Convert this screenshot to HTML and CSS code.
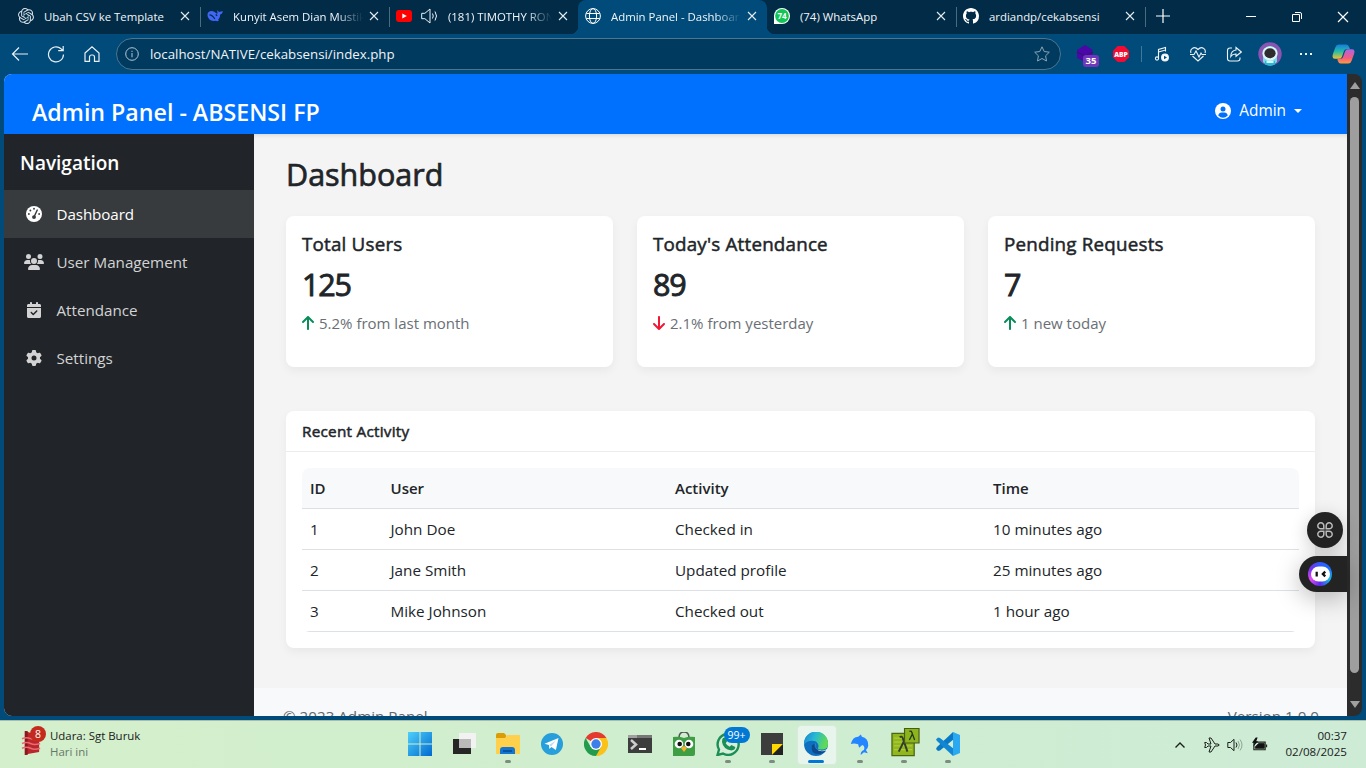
FILE: index.html
```html
<!DOCTYPE html>
<html lang="id">
<head>
<meta charset="utf-8">
<title>Admin Panel - Dashboard</title>
<link rel="stylesheet" href="styles.css">
</head>
<body>
<div class="desktop">
  <div class="tabstrip">
    <div class="tab">
      <svg class="fav" viewBox="0 0 24 24"><path fill="#d5dee5" d="M22.2819 9.8211a5.9847 5.9847 0 0 0-.5157-4.9108 6.0462 6.0462 0 0 0-6.5098-2.9A6.0651 6.0651 0 0 0 4.9807 4.1818a5.9847 5.9847 0 0 0-3.9977 2.9 6.0462 6.0462 0 0 0 .7427 7.0966 5.98 5.98 0 0 0 .511 4.9107 6.051 6.051 0 0 0 6.5146 2.9001A5.9847 5.9847 0 0 0 13.2599 24a6.0557 6.0557 0 0 0 5.7718-4.2058 5.9894 5.9894 0 0 0 3.9977-2.9001 6.0557 6.0557 0 0 0-.7475-7.0729zm-9.022 12.6081a4.4755 4.4755 0 0 1-2.8764-1.0408l.1419-.0804 4.7783-2.7582a.7948.7948 0 0 0 .3927-.6813v-6.7369l2.02 1.1686a.071.071 0 0 1 .038.052v5.5826a4.504 4.504 0 0 1-4.4945 4.4944zm-9.6607-4.1254a4.4708 4.4708 0 0 1-.5346-3.0137l.142.0852 4.783 2.7582a.7712.7712 0 0 0 .7806 0l5.8428-3.3685v2.3324a.0804.0804 0 0 1-.0332.0615L9.74 19.9502a4.4992 4.4992 0 0 1-6.1408-1.6464zM2.3408 7.8956a4.485 4.485 0 0 1 2.3655-1.9728V11.6a.7664.7664 0 0 0 .3879.6765l5.8144 3.3543-2.0201 1.1685a.0757.0757 0 0 1-.071 0l-4.8303-2.7865A4.504 4.504 0 0 1 2.3408 7.872zm16.5963 3.8558L13.1038 8.364 15.1192 7.2a.0757.0757 0 0 1 .071 0l4.8303 2.7913a4.4944 4.4944 0 0 1-.6765 8.1042v-5.6772a.79.79 0 0 0-.407-.667zm2.0107-3.0231l-.142-.0852-4.7735-2.7818a.7759.7759 0 0 0-.7854 0L9.409 9.2297V6.8974a.0662.0662 0 0 1 .0284-.0615l4.8303-2.7866a4.4992 4.4992 0 0 1 6.6802 4.66zM8.3065 12.863l-2.02-1.1638a.0804.0804 0 0 1-.038-.0567V6.0742a4.4992 4.4992 0 0 1 7.3757-3.4537l-.142.0805L8.704 5.459a.7948.7948 0 0 0-.3927.6813zm1.0976-2.3654l2.602-1.4998 2.6069 1.4998v2.9994l-2.5974 1.4997-2.6067-1.4997Z"/></svg>
      <span class="tab-title">Ubah CSV ke Template</span>
      <svg class="x" viewBox="0 0 10 10"><path d="M1 1l8 8M9 1L1 9"/></svg>
    </div>
    <div class="tab">
      <svg class="fav" viewBox="0 0 16 16"><path fill="#4166f5" d="M.5 7C.4 4.300 2.300 2.800 5 2.900c1.300 0 2.300.8 3.300 1.700 1 1 2 1.500 2.200.5.100-1.200-.7-1.700 0-3.100.5 1.500 1.300 1.700 2.400 2 .8-.7 1.800-.4 2.800-.9-.1 2.200-1 3.100-2.500 3.300-.1 2.700-1 4.400-2.300 5.500l1.300.9c-2 .8-3 .3-4-.1C4.200 13.800.700 11 .5 7z"/><path d="M2.500 6.800c2 0 3.600 1.400 5.300 4M8.700 6.500l1.500 1.300" stroke="#012b47" stroke-width="1.200" fill="none"/></svg>
      <span class="tab-title fade">Kunyit Asem Dian Mustik</span>
      <svg class="x" viewBox="0 0 10 10"><path d="M1 1l8 8M9 1L1 9"/></svg>
    </div>
    <div class="tab nosep">
      <svg class="fav" viewBox="0 0 16 16"><rect y="2" width="16" height="12" rx="3" fill="#f00"/><path d="M6.300 5.500v5l4.500-2.500z" fill="#fff"/></svg>
      <svg class="speaker" viewBox="0 0 17 16" fill="none" stroke="#eef3f7"><path d="M.7 5.300h3.200L9 1v14l-5.100-4.300H.7zM11.500 5.500q1.500 2.500 0 5M14 3.500q3 4.500 0 9"/></svg>
      <span class="tab-title fade">(181) TIMOTHY RON</span>
      <svg class="x" viewBox="0 0 10 10"><path d="M1 1l8 8M9 1L1 9"/></svg>
    </div>
    <div class="tab active nosep">
      <svg class="fav" viewBox="0 0 16 16" fill="none" stroke="#fff"><circle cx="8" cy="8" r="7.400"/><ellipse cx="8" cy="8" rx="3.600" ry="7.400"/><path d="M1.300 5.500h13.400M1.300 10.500h13.400"/></svg>
      <span class="tab-title fade">Admin Panel - Dashboar</span>
      <svg class="x" viewBox="0 0 10 10"><path d="M1 1l8 8M9 1L1 9"/></svg>
    </div>
    <div class="tab">
      <svg class="fav" viewBox="0 0 16 16"><path d="M0 16V8a8 8 0 1 1 8 8z" fill="#fff"/><circle cx="8" cy="8" r="6.900" fill="#12c656"/><text class="fav-count" x="8" y="11" text-anchor="middle">74</text></svg>
      <span class="tab-title">(74) WhatsApp</span>
      <svg class="x" viewBox="0 0 10 10"><path d="M1 1l8 8M9 1L1 9"/></svg>
    </div>
    <div class="tab">
      <svg class="fav" viewBox="0 0 16 16"><path fill="#fff" d="M8 0C3.580 0 0 3.580 0 8c0 3.540 2.290 6.530 5.470 7.590.4.070.55-.17.55-.38 0-.19-.01-.82-.01-1.490-2.010.37-2.530-.49-2.690-.94-.09-.23-.48-.94-.82-1.130-.28-.15-.68-.52-.01-.53.63-.01 1.080.58 1.230.82.720 1.210 1.870.87 2.330.66.070-.52.28-.87.51-1.070-1.780-.2-3.640-.89-3.640-3.950 0-.87.31-1.590.82-2.150-.08-.2-.36-1.020.08-2.120 0 0 .67-.21 2.200.82.640-.18 1.320-.27 2-.27s1.360.09 2 .27c1.530-1.040 2.200-.82 2.200-.82.440 1.100.16 1.920.08 2.120.51.56.82 1.270.82 2.150 0 3.070-1.870 3.750-3.650 3.950.29.25.54.73.54 1.480 0 1.070-.01 1.930-.01 2.200 0 .21.15.46.55.38A8.010 8.010 0 0 0 16 8c0-4.420-3.580-8-8-8z"/></svg>
      <span class="tab-title">ardiandp/cekabsensi</span>
      <svg class="x" viewBox="0 0 10 10"><path d="M1 1l8 8M9 1L1 9"/></svg>
    </div>
    <svg class="newtab" viewBox="0 0 14 14"><path d="M7 0v14M0 7h14"/></svg>
    <div class="winctl">
      <svg viewBox="0 0 12 12"><path d="M1 5.500h10"/></svg>
      <svg viewBox="0 0 12 12"><path d="M1.500 3.500h7v7h-7zM4 1.500h5q1.500 0 1.500 1.500v5"/></svg>
      <svg viewBox="0 0 12 12"><path d="M1 1l10 10M11 1L1 11" stroke-width="1.200"/></svg>
    </div>
  </div>

  <div class="toolbar">
    <div class="navbtns">
      <svg viewBox="0 0 18 18"><path d="M17 9H1.500M8 2.500L1.500 9 8 15.500"/></svg>
      <svg viewBox="0 0 18 18"><path d="M16.500 9.500A7.500 7.500 0 1 1 14 3.800L16 5.500M16.200 1v4.700h-5"/></svg>
      <svg viewBox="0 0 18 18"><path d="M2 8l7-6.300L16 8v8.300h-4.500V12a2 2 0 0 0-2-2h-1a2 2 0 0 0-2 2v4.300H2z"/></svg>
    </div>
    <div class="address">
      <svg class="info" viewBox="0 0 14 14"><circle cx="7" cy="7" r="6.300"/><path d="M7 6v4.300M7 3.800v1.200"/></svg>
      <span class="url">localhost/NATIVE/cekabsensi/index.php</span>
      <svg class="star" viewBox="0 0 16 16"><path d="M8 .8l2.200 4.700 5.100.7-3.700 3.600.9 5.200L8 12.500 3.500 15l.9-5.200L.7 6.200l5.100-.7z"/></svg>
    </div>
    <div class="tools">
      <div class="ext"><svg viewBox="0 0 22 22"><path d="M1 5l8-5 8 5-1 1 1 7-8 4-8-4v-5z" fill="#4b07a7"/><path d="M1 7l8 4 8-4" fill="none" stroke="#2e1872"/></svg><span class="ext-badge">35</span></div>
      <div class="abp"><svg viewBox="0 0 16 16"><path d="M4.700 0h6.600L16 4.700v6.600L11.300 16H4.700L0 11.300V4.700z" fill="#f20b32"/><text class="abp-text" x="8" y="10.500" text-anchor="middle">ABP</text></svg></div>
      <span class="toolsep"></span>
      <div class="actions">
        <svg viewBox="0 0 16 16"><path d="M4.500 12V3.500l7-2v4M4.500 6l7-2"/><circle cx="3" cy="12.500" r="1.600"/><circle cx="11" cy="11.500" r="3.400" fill="#fff"/><path d="M10 9.700v3.600l3-1.800z" fill="#004b7a" stroke="none"/></svg>
        <svg viewBox="0 0 16 16"><path d="M1 7C-.5 2.500 4.500-.2 8 3.500 11.500-.2 16.500 2.500 15 7M2.500 10L8 15l5.500-5M0 8.500h4L6 5l3 6 2-4 1 1.500h4"/></svg>
        <svg viewBox="0 0 16 16"><path d="M6 2H4Q1.500 2 1.500 4.500v8Q1.500 15 4 15h7.500Q14 15 14 12.500V11.500M10 1.500L15.300 6 10 10.300V8Q6.500 7.800 4.800 10.500 5 4.600 10 4z"/></svg>
      </div>
      <svg class="avatar" viewBox="0 0 24 24"><circle cx="12" cy="12" r="11.700" fill="#8a55b0"/><path d="M5 20V8q7-8 14 0v12q-7 7-14 0z" fill="#75d9e6"/><ellipse cx="12" cy="11.500" rx="7.600" ry="7" fill="#d9f7fa"/><ellipse cx="12" cy="11.300" rx="5.600" ry="5" fill="#302b2e"/><path d="M7 19h10v3.500q-5 2-10 0z" fill="#20bdd2"/><path d="M8.500 18.500h7V21h-7z" fill="#d9f7fa"/></svg>
      <svg class="dots" viewBox="0 0 16 16"><path d="M2 8h2M7 8h2M12 8h2"/></svg>
      <svg class="copilot" viewBox="0 0 24 22"><defs><linearGradient id="cpA" x2="0" y2="1"><stop stop-color="#147ddd"/><stop offset=".5" stop-color="#27bda7"/><stop offset="1" stop-color="#f5c12a"/></linearGradient><linearGradient id="cpB" x2="0" y2="1"><stop stop-color="#ac65e5"/><stop offset=".6" stop-color="#f45b80"/><stop offset="1" stop-color="#ff9d3b"/></linearGradient></defs><path d="M7 1h8q2 0 3 3l.7 2H15q-2 0-2.700 2.500l-2 5.500Q9.500 16 7 16H3Q-.5 16 1 11l2.500-7Q4.500 1 7 1z" fill="url(#cpA)"/><path d="M17 21H9q-2 0-3-3l-.5-2H9q2 0 2.700-2.500l2-5.500q.8-2 3.300-2h4q3.500 0 2 5l-2.500 7q-1 3-3.500 3z" fill="url(#cpB)"/></svg>
    </div>
  </div>

  <div class="viewport">
    <div class="page">
      <header class="topbar">
        <h1 class="brand">Admin Panel - ABSENSI FP</h1>
        <div class="user"><svg viewBox="0 0 16 16"><circle cx="8" cy="8" r="8" fill="#fff"/><circle cx="8" cy="6" r="2.500" fill="#0070ff"/><path d="M3.200 12.500Q4 9.500 6.500 9.500h3q2.500 0 3.300 3Q8 17 3.200 12.500z" fill="#0070ff"/></svg><span>Admin</span><i class="caret"></i></div>
      </header>
      <div class="body">
        <nav class="sidebar">
          <h2 class="nav-head">Navigation</h2>
          <a class="nav-item current"><svg viewBox="0 0 512 512"><circle cx="256" cy="256" r="256"/><g fill="#373b3e"><circle cx="256" cy="88" r="30"/><circle cx="140" cy="142" r="30"/><circle cx="92" cy="256" r="30"/><circle cx="420" cy="256" r="30"/><circle cx="256" cy="354" r="62"/></g><path d="M256 354L360 130" stroke="#373b3e" stroke-width="46" stroke-linecap="round"/></svg><span>Dashboard</span></a>
          <a class="nav-item"><svg viewBox="0 0 640 512"><path d="M144 0a80 80 0 1 1 0 160A80 80 0 1 1 144 0zM512 0a80 80 0 1 1 0 160A80 80 0 1 1 512 0zM0 298.700C0 239.800 47.800 192 106.700 192h42.700c15.900 0 31 3.500 44.600 9.700c-1.300 7.200-1.900 14.700-1.900 22.300c0 38.200 16.800 72.500 43.300 96H21.300C9.600 320 0 310.400 0 298.700zM404.600 320c26.600-23.500 43.300-57.800 43.300-96c0-7.600-.7-15-1.900-22.300c13.600-6.300 28.700-9.700 44.600-9.700h42.700C592.200 192 640 239.800 640 298.700c0 11.800-9.600 21.300-21.300 21.300zM224 224a96 96 0 1 1 192 0 96 96 0 1 1-192 0zM128 485.300C128 411.700 187.700 352 261.300 352H378.700C452.300 352 512 411.700 512 485.300c0 14.700-11.900 26.700-26.700 26.700H154.700c-14.700 0-26.700-11.900-26.700-26.700z"/></svg><span>User Management</span></a>
          <a class="nav-item"><svg viewBox="0 0 448 512"><path d="M128 0c17.700 0 32 14.300 32 32V64H288V32c0-17.700 14.300-32 32-32s32 14.300 32 32V64h48c26.500 0 48 21.500 48 48v48H0V112C0 85.500 21.500 64 48 64H96V32c0-17.700 14.300-32 32-32zM0 192H448V464c0 26.500-21.500 48-48 48H48c-26.500 0-48-21.500-48-48V192zM329 305c9.400-9.400 9.400-24.600 0-33.900s-24.600-9.400-33.900 0l-95 95-47-47c-9.400-9.400-24.600-9.400-33.900 0s-9.400 24.600 0 33.900l64 64c9.400 9.400 24.600 9.400 33.900 0L329 305z"/></svg><span>Attendance</span></a>
          <a class="nav-item"><svg viewBox="0 0 512 512"><path d="M495.900 166.600c3.200 8.700.5 18.400-6.400 24.600l-43.300 39.400c1.100 8.300 1.700 16.800 1.700 25.400s-.6 17.100-1.700 25.400l43.300 39.400c6.900 6.200 9.600 15.900 6.400 24.600c-4.400 11.900-9.700 23.300-15.800 34.300l-4.700 8.100c-6.600 11-14 21.400-22.100 31.200c-5.900 7.200-15.700 9.600-24.500 6.800l-55.700-17.700c-13.400 10.300-28.200 18.900-44 25.400l-12.500 57.100c-2 9.100-9 16.300-18.200 17.800c-13.800 2.300-28 3.500-42.500 3.500s-28.700-1.200-42.500-3.500c-9.200-1.500-16.200-8.700-18.200-17.800l-12.500-57.100c-15.800-6.500-30.600-15.100-44-25.400L83.100 425.900c-8.800 2.800-18.600.3-24.500-6.800c-8.100-9.800-15.500-20.200-22.100-31.200l-4.700-8.100c-6.100-11-11.400-22.400-15.800-34.300c-3.200-8.700-.5-18.400 6.400-24.600l43.300-39.400C64.600 273.100 64 264.600 64 256s.6-17.100 1.700-25.400L22.400 191.200c-6.900-6.200-9.600-15.900-6.400-24.600c4.400-11.900 9.700-23.300 15.800-34.300l4.700-8.100c6.600-11 14-21.400 22.100-31.200c5.900-7.200 15.700-9.600 24.500-6.800l55.700 17.700c13.400-10.300 28.200-18.900 44-25.400l12.500-57.100c2-9.100 9-16.300 18.200-17.800C227.300 1.200 241.500 0 256 0s28.700 1.200 42.500 3.500c9.200 1.500 16.200 8.700 18.200 17.800l12.500 57.100c15.800 6.500 30.600 15.100 44 25.400l55.700-17.700c8.800-2.800 18.600-.3 24.500 6.800c8.100 9.800 15.500 20.200 22.100 31.200l4.700 8.100c6.100 11 11.400 22.400 15.800 34.300zM256 336a80 80 0 1 0 0-160 80 80 0 1 0 0 160z"/></svg><span>Settings</span></a>
        </nav>
        <div class="content">
          <main class="main">
            <h2 class="title">Dashboard</h2>
            <div class="stats">
              <section class="card stat">
                <h5 class="label">Total Users</h5><strong class="value">125</strong>
                <p class="trend up"><svg viewBox="0 0 384 512"><path d="M214.600 41.400c-12.500-12.500-32.800-12.500-45.300 0l-160 160c-12.500 12.500-12.500 32.800 0 45.300s32.800 12.500 45.300 0L160 141.200V448c0 17.700 14.300 32 32 32s32-14.300 32-32V141.200L329.400 246.600c12.500 12.500 32.800 12.500 45.300 0s12.500-32.800 0-45.300l-160-160z"/></svg><span>5.2% from last month</span></p>
              </section>
              <section class="card stat">
                <h5 class="label">Today's Attendance</h5><strong class="value">89</strong>
                <p class="trend down"><svg viewBox="0 0 384 512"><path transform="matrix(1 0 0 -1 0 512)" d="M214.600 41.400c-12.500-12.500-32.800-12.500-45.300 0l-160 160c-12.500 12.500-12.500 32.800 0 45.300s32.800 12.500 45.300 0L160 141.200V448c0 17.700 14.300 32 32 32s32-14.300 32-32V141.200L329.400 246.600c12.500 12.500 32.800 12.500 45.300 0s12.500-32.800 0-45.300l-160-160z"/></svg><span>2.1% from yesterday</span></p>
              </section>
              <section class="card stat">
                <h5 class="label">Pending Requests</h5><strong class="value">7</strong>
                <p class="trend up"><svg viewBox="0 0 384 512"><path d="M214.600 41.400c-12.500-12.500-32.800-12.500-45.300 0l-160 160c-12.500 12.500-12.500 32.800 0 45.300s32.800 12.500 45.300 0L160 141.200V448c0 17.700 14.300 32 32 32s32-14.300 32-32V141.200L329.400 246.600c12.500 12.500 32.800 12.500 45.300 0s12.500-32.800 0-45.300l-160-160z"/></svg><span>1 new today</span></p>
              </section>
            </div>
            <section class="card recent">
              <h5 class="recent-head">Recent Activity</h5>
              <div class="table">
                <div class="row head"><span>ID</span><span>User</span><span>Activity</span><span>Time</span></div>
                <div class="row"><span>1</span><span>John Doe</span><span>Checked in</span><span>10 minutes ago</span></div>
                <div class="row"><span>2</span><span>Jane Smith</span><span>Updated profile</span><span>25 minutes ago</span></div>
                <div class="row"><span>3</span><span>Mike Johnson</span><span>Checked out</span><span>1 hour ago</span></div>
              </div>
            </section>
          </main>
          <footer class="footer"><span>© 2023 Admin Panel</span><span>Version 1.0.0</span></footer>
        </div>
      </div>
      <div class="float-round"><svg viewBox="0 0 16 16" fill="none" stroke="#bbb" stroke-width="1.500"><path d="M6.800 6.800H4A3 3 0 1 1 6.800 4zM9.200 6.800V4A3 3 0 1 1 12 6.800zM6.800 9.200V12A3 3 0 1 1 4 9.200zM9.200 9.200H12A3 3 0 1 1 9.200 12z"/></svg></div>
      <div class="float-pill"><div class="bot"><svg viewBox="0 0 20 16"><rect width="20" height="16" rx="8" fill="#fff"/><path d="M6 5.500v5M15 5.500L12.500 8l2.500 2.500" stroke="#111" stroke-width="2.400" fill="none"/></svg></div></div>
    </div>
    <div class="scrollbar"><i class="arr-up"></i><i class="thumb"></i><i class="arr-down"></i></div>
  </div>

  <div class="taskbar">
    <div class="weather">
      <div class="air"><svg viewBox="0 0 22 26"><path d="M4 1l12 4 3 3v15L7 25l-3 1z" fill="#b9262b"/><path d="M4 1h3v25H4z" fill="#8d171d"/><path d="M1 9q5-2 9 0t10 0M1 14q5-2 9 0t10 0M1 19q5-2 9 0t10 0" fill="none" stroke="#ea6b75" stroke-width="1.600"/></svg><span class="air-badge">8</span></div>
      <div class="weather-text"><span>Udara: Sgt Buruk</span><span class="muted">Hari ini</span></div>
    </div>
    <div class="apps">
      <div class="app"><svg viewBox="0 0 24 24"><defs><linearGradient id="win" x2="1" y2="1"><stop stop-color="#4fd0fb"/><stop offset="1" stop-color="#0069cf"/></linearGradient></defs><path fill="url(#win)" d="M0 0h11.500v11.500H0zM12.500 0H24v11.500H12.500zM0 12.500h11.500V24H0zM12.500 12.500H24V24H12.500z"/></svg></div>
      <div class="app"><svg viewBox="0 0 24 24"><path fill="#262626" d="M1 7h18v15H1z"/><path fill="#f2f2f2" d="M7 1h17v15H7z"/><path fill="#bababa" d="M7 7h12v9H7z"/></svg></div>
      <div class="app open"><svg viewBox="0 0 24 24"><path fill="#dc9c05" d="M0 3q0-2 2-2h6l2 2v5H0z"/><path fill="#ffd04b" d="M0 6h9l2-3h13v19H0z"/><path fill="#1475cf" d="M4 22v-4q0-3 3-3h9q3 0 3 3v4z"/><path fill="#0753a1" d="M7 18h9v2H7z"/></svg></div>
      <div class="app"><svg viewBox="0 0 24 24"><circle cx="12" cy="12" r="11" fill="#279fda"/><path fill="#fff" d="M4.500 11.800L18.500 6l-2.600 12-4.500-3-2 2-.5-4z"/><path d="M9 13l7-4.500-5 6" fill="#b9dcf0"/></svg></div>
      <div class="app"><svg viewBox="0 0 24 24"><path fill="#e33b2e" d="M12 12L1.600 6A12 12 0 0 1 22.400 6H12z"/><path fill="#fbc116" d="M12 12h5.200L12 24A12 12 0 0 0 22.400 6H12z"/><path fill="#229c4c" d="M6.800 15L1.600 6A12 12 0 0 0 12 24l5-9z"/><circle cx="12" cy="12" r="6" fill="#fff"/><circle cx="12" cy="12" r="4.700" fill="#3d7eea"/></svg></div>
      <div class="app"><svg viewBox="0 0 24 24"><path fill="#3d3d3d" d="M0 3h24v18H0z"/><path fill="#a0a0a0" d="M0 3h24v3H0z"/><path fill="#777" d="M9 3h15v3H9z"/><path d="M3 8l5 4.500L3 17" fill="none" stroke="#ccc" stroke-width="2.500"/><path d="M11 17h7" stroke="#fff" stroke-width="2"/></svg></div>
      <div class="app"><svg viewBox="0 0 24 24"><path d="M7 6q0-6 5-6t5 6" fill="none" stroke="#555" stroke-width="1.500"/><path fill="#3d9e43" d="M1 5q6-1 11 1 5-2 11-1v17q0 2-2 2H1z"/><circle cx="7" cy="12" r="4.300" fill="#fff"/><circle cx="17" cy="12" r="4.300" fill="#fff"/><circle cx="7.700" cy="12" r="2.300" fill="#111"/><circle cx="16.300" cy="12" r="2.300" fill="#111"/><path fill="#f7b32b" d="M9 16l3-2 3 2-3 4z"/></svg></div>
      <div class="app open"><svg viewBox="0 0 24 24"><path d="M1.500 23l1.500-5.500A10.500 10.500 0 1 1 7 21.500z" fill="#d7efd8" stroke="#1b8f55" stroke-width="2.400"/><path fill="#1b8f55" d="M7 6l2-.5 2 4-1.300 1.700q1.300 2.500 4 3.600L15.300 13l4 2q0 3-4 3.500Q7 17 6 10q0-3 1-4z"/></svg><span class="wa-badge">99+</span></div>
      <div class="app open"><svg viewBox="0 0 24 24"><path fill="#3d3d3d" d="M1 1h22v11L12 23H1z"/><path fill="#ffd800" d="M12 12h11L12 23z"/><path fill="#222" d="M23 12v11H12z"/></svg></div>
      <div class="app focused"><svg viewBox="0 0 24 24"><defs><linearGradient id="edg" x2="1" y2=".3"><stop stop-color="#1682d2"/><stop offset=".5" stop-color="#28b9d4"/><stop offset="1" stop-color="#5fda55"/></linearGradient></defs><circle cx="12" cy="12" r="12" fill="#0e6fc0"/><path fill="url(#edg)" d="M0 11A12 12 0 0 1 24 12q0 5-5 5.500-5 .3-5-1.500c1-1 1-6-4-7Q3 8 0 13z"/><path fill="#0d4b8c" d="M8 13q-2 9 6.500 9 4.500 0 8-4-3 1.500-7 .5-6-2-5-6.500z"/><path fill="#e7f4ee" d="M12 11q-2.500 3.500 1.500 6.500 5 2.500 9.500-.5l2 2-1.500 1.500-1.500-2q-4 1.500-7.500 0-5-3-2.500-7.500z"/></svg></div>
      <div class="app open"><svg class="dolphin" viewBox="0 0 24 24"><path fill="#2385ff" d="M2 12Q4 4 10 4l3-2.500 1 2.500q7 1 7 9.500-.2 3-2.500 5l2 3.500-4.200-1-3.500 3q-.5-4 3.500-5.500 1.500-4-1.800-5.500L11 16l-1-3.800Q5.500 11 2 12z"/></svg></div>
      <div class="app open"><svg class="npp" viewBox="0 0 30 30"><path fill="#91b71c" stroke="#4b6716" stroke-width="1.300" d="M1 6h23v23H1z"/><path d="M3 11h19M3 15h19M3 19h19M3 23h19" stroke="#b3d248"/><path d="M9 10q2-1.500 3.200 1L17 25M13 15L8 25" fill="none" stroke="#343d2c" stroke-width="2"/><path fill="#8ab51c" stroke="#4b5a16" stroke-width="1.200" d="M14 1h15v15H14z"/><path d="M19 4q2-1 2.500 1l3 8M22 7l-3 6" fill="none" stroke="#26331b" stroke-width="1.300"/></svg></div>
      <div class="app open"><svg viewBox="0 0 24 24"><path fill="#0a79c5" d="M17 0L1 15l-1 2 2 2 2-.5L18 7z"/><path fill="#1186d2" d="M17 24L1 9 0 7.500l2-2L4 6l14 11z"/><path fill="#2aa8f1" d="M17 0l7 3v18l-7 3z"/></svg></div>
    </div>
    <div class="tray">
      <svg class="chev" viewBox="0 0 12 12"><path d="M1.500 8.500L6 4l4.500 4.500" stroke-width="1.400"/></svg>
      <svg class="plane" viewBox="0 0 16 16"><path d="M.7 5.500h1.800L4 7h3L5 1h2l4 6h3q2.500 1 0 2h-3l-4 6H5l2-6H4l-1.500 1.500H.7L1.500 8z"/></svg>
      <svg class="vol" viewBox="0 0 16 16"><path d="M.8 5.500h2.700L7 2.300v11.400L3.500 10.500H.8zM9 5.500q2 2.500 0 5"/><path d="M11 4q3 4 0 8M13 2.500q4 5.500 0 11" opacity=".35"/></svg>
      <svg class="batt" viewBox="0 0 17 16"><path d="M2 5h12v8H2zM15.500 7.500v3" stroke-width="1.200"/><path d="M7 6.500h6v5H3.500V10z" fill="#111"/><path d="M4 0L0 5.500h2.500L1.500 9.500l5-5.500H4.500L6 0z" fill="#111" stroke="none"/></svg>
      <div class="clock"><span>00:37</span><span>02/08/2025</span></div>
    </div>
  </div>
</div>
</body>
</html>
```
FILE: styles.css
```css
* { box-sizing: border-box; }
body { margin: 0; overflow: hidden; font-family: "Open Sans", "Noto Sans", sans-serif; }
h1, h2, h5, p { margin: 0; }
svg { display: block; flex: none; }
.desktop { width: 1366px; height: 768px; display: flex; flex-direction: column; background: #004b7a; overflow: hidden; }

/* Tab strip */
.tabstrip { height: 34px; flex: none; display: flex; background: #012b47; padding-left: 11px; }
.tab { width: 189px; flex: none; display: flex; align-items: center; padding: 0 10px 2px 7px; position: relative; color: #f1f5f8; font-size: 11.400px; white-space: nowrap; }
.tab::after { content: ""; position: absolute; right: -1px; top: 7px; width: 1px; height: 20px; background: #4b6b80; }
.tab.nosep::after { display: none; }
.tab.active { background: #004b7a; border-radius: 8px 8px 0 0; }
.tab.active::before { content: ""; position: absolute; bottom: 0; left: -8px; right: -8px; height: 8px; background: radial-gradient(circle at 0 0, transparent 8px, #004b7a 8.500px) left / 8px 8px no-repeat, radial-gradient(circle at 100% 0, transparent 8px, #004b7a 8.500px) right / 8px 8px no-repeat; }
.fav { width: 16px; height: 16px; }
.fav-count { font-size: 8px; font-weight: 700; fill: #fff; }
.speaker { width: 17px; height: 16px; margin-left: 9px; }
.tab-title { flex: 1; margin: 0 6px 0 10px; overflow: hidden; }
.fade { -webkit-mask-image: linear-gradient(90deg, #000 calc(100% - 26px), transparent); mask-image: linear-gradient(90deg, #000 calc(100% - 26px), transparent); }
.x { width: 10px; height: 10px; fill: none; stroke: #e6edf2; stroke-width: 1.100; }
.newtab { width: 14px; height: 14px; margin: 9px 0 0 11px; stroke: #fff; stroke-width: 1.200; }
.winctl { display: flex; gap: 34px; margin: 11px 17px 0 auto; }
.winctl svg { width: 12px; height: 12px; fill: none; stroke: #fff; }

/* Toolbar */
.toolbar { height: 40px; flex: none; display: flex; align-items: center; padding: 0 10px 0 11px; }
.navbtns { display: flex; gap: 18px; width: 105px; flex: none; }
.navbtns svg { width: 18px; height: 18px; fill: none; stroke: #e9f0f5; stroke-width: 1.200; }
.address { width: 945px; flex: none; height: 32px; border: 1px solid #4c7590; border-radius: 16px; background: #003a5e; display: flex; align-items: center; padding: 0 10px 0 8px; }
.info { width: 14px; height: 14px; fill: none; stroke: #b6c6d1; }
.url { flex: 1; margin-left: 11px; color: #f0f4f7; font-size: 13.270px; }
.star { width: 16px; height: 16px; fill: none; stroke: #8ba5b6; }
.tools { display: flex; align-items: center; padding-left: 15px; }
.tools svg { fill: none; stroke-width: 1.100; }
.ext { position: relative; width: 22px; height: 22px; }
.ext svg { width: 22px; height: 22px; margin-top: 2px; }
.ext-badge { position: absolute; left: 7px; top: 12px; width: 16px; height: 12px; border-radius: 3px; background: #7137ba; color: #fff; font-size: 9.500px; line-height: 12px; text-align: center; font-weight: 700; }
.abp { margin-left: 15px; }
.abp svg { width: 16px; height: 16px; }
.abp-text { font-size: 6.700px; font-weight: 800; fill: #fff; }
.toolsep { width: 1px; height: 16px; margin: 0 12px; background: #447696; }
.actions { display: flex; gap: 20px; }
.actions svg { width: 16px; height: 16px; stroke: #eef3f6; }
.avatar { width: 24px; height: 24px; margin: 0 16px; }
.tools .dots { width: 16px; height: 16px; stroke: #eef3f6; stroke-width: 2; }
.copilot { width: 23px; height: 22px; margin-left: 18px; }

/* Page */
.viewport { height: 642px; flex: none; display: flex; margin: 0 4px; border-radius: 8px; overflow: hidden; }
.page { width: 1343px; position: relative; display: flex; flex-direction: column; background: #f4f4f4; }
.topbar { height: 60px; flex: none; background: #0070ff; display: flex; align-items: center; justify-content: space-between; padding: 16px 45px 0 28px; color: #fff; }
.brand { font-size: 23.200px; line-height: 30px; font-weight: 600; }
.user { display: flex; align-items: center; font-size: 15.400px; line-height: 20px; padding-bottom: 2px; }
.user svg { width: 16px; height: 16px; margin-right: 8px; }
.caret { border: 4px solid transparent; border-top-color: #fff; border-bottom: 0; margin-left: 8px; }
.body { flex: 1; display: flex; min-height: 0; }
.sidebar { width: 250px; flex: none; background: #212529; color: #d3d3d4; }
.nav-head { height: 56px; padding: 16px; color: #fff; font-size: 19px; line-height: 26px; font-weight: 600; }
.nav-item { height: 48px; display: flex; align-items: center; padding-left: 20px; font-size: 15.200px; }
.nav-item svg { width: 20px; height: 16px; margin-right: 12.500px; fill: currentColor; }
.nav-item.current { background: #373b3e; color: #fff; }
.nav-item.current span { letter-spacing: -.1px; }
.content { flex: 1; display: flex; flex-direction: column; color: #212529; box-shadow: inset 0 5px 5px -4px #0002; }
.main { height: 554px; flex: none; padding: 21px 32px 0; }
.title, .label, .value, .recent-head { font-weight: 400; -webkit-text-stroke: .35px #212529; }
.title { font-size: 30.500px; line-height: 38px; margin-bottom: 23px; -webkit-text-stroke-width: .7px; }
.stats { display: grid; grid-template-columns: repeat(3, 327px); gap: 24px; margin-bottom: 44px; }
.card { background: #fff; border-radius: 8px; box-shadow: 0 4px 10px #0000000d; }
.stat { height: 151px; padding: 16px; display: flex; flex-direction: column; }
.label { font-size: 18.800px; letter-spacing: .2px; line-height: 25px; margin-bottom: 8px; -webkit-text-stroke-width: .5px; }
.value { font-size: 30.500px; letter-spacing: -1.200px; line-height: 38px; margin-bottom: 8px; -webkit-text-stroke-width: .9px; }
.trend { display: flex; align-items: center; font-size: 15px; line-height: 24px; color: #6a6f75; }
.trend svg { width: 12px; height: 16px; margin-right: 5px; }
.up svg { fill: #098c5a; }
.down svg { fill: #f21835; }
.recent { height: 237px; }
.recent-head { height: 41px; padding: 0 16px; line-height: 41px; font-size: 15.300px; letter-spacing: .25px; border-bottom: 1px solid #ededed; -webkit-text-stroke-width: .5px; }
.table { margin: 16px 16px 0; border-radius: 8px; overflow: hidden; }
.row { height: 41px; display: grid; grid-template-columns: 80.500px 284.500px 318px 1fr; padding: 0 8px; line-height: 41px; font-size: 15.250px; border-bottom: 1px solid #dde1e5; }
.row.head { background: #f8f9fa; font-weight: 600; font-size: 15px; }
.footer { flex: none; height: 28px; overflow: hidden; background: #f8f9fb; display: flex; justify-content: space-between; padding: 16px 28px 0 29px; color: #61676d; font-size: 15.200px; line-height: 24px; white-space: nowrap; }
.float-round { position: absolute; z-index: 3; right: 4px; top: 438px; width: 36px; height: 36px; border-radius: 50%; background: #232323; display: grid; place-items: center; box-shadow: 0 4px 18px #0003; }
.float-round svg { width: 16px; height: 16px; }
.float-pill { position: absolute; z-index: 3; right: 0; top: 482px; width: 48px; height: 36px; border-radius: 18px 0 0 18px; background: #232323; padding: 6px 9px; box-shadow: 0 6px 24px #0004; }
.bot { width: 24px; height: 24px; border-radius: 50%; background: conic-gradient(#315bff, #196bff, #16b8e8, #5a29ed, #e04af3, #7431ed, #315bff); display: grid; place-items: center; }
.bot svg { width: 19px; height: 16px; }
.scrollbar { width: 15px; background: #2c2c2c; display: flex; flex-direction: column; align-items: center; padding: 8px 0; }
.arr-up { border: 5px solid transparent; border-top: 0; border-bottom: 7px solid #a0a0a0; }
.thumb { width: 9px; height: 576px; margin-top: 8px; border-radius: 5px; background: #9e9e9e; }
.arr-down { border: 5px solid transparent; border-bottom: 0; border-top: 7px solid #a0a0a0; margin-top: auto; }

/* Taskbar */
.taskbar { margin-top: 4px; height: 48px; flex: none; display: flex; background: linear-gradient(90deg, #d4efcb, #cfeecf 50%, #ceebd6); border-top: 1px solid #a9bdac; color: #1a211b; }
.weather { width: 397.500px; display: flex; padding: 7px 0 0 21px; }
.air { position: relative; width: 29px; }
.air svg { width: 21px; height: 25px; margin-top: 2px; }
.air-badge { position: absolute; left: 9px; top: -2px; width: 16px; height: 16px; border-radius: 50%; background: #c42b1c; color: #fff; text-align: center; font-size: 10.500px; line-height: 16px; }
.weather-text { display: flex; flex-direction: column; font-size: 11.450px; line-height: 16px; }
.muted { color: #66776a; }
.apps { display: flex; }
.app { width: 44px; height: 47px; position: relative; display: flex; justify-content: center; padding-top: 11px; }
.app svg { width: 24px; height: 24px; position: relative; }
.app .dolphin { width: 22px; height: 24px; }
.app.open::after { content: ""; position: absolute; bottom: 5px; left: 19px; width: 6px; height: 3px; border-radius: 2px; background: #7c8c7f; }
.app.focused::before { content: ""; position: absolute; left: 3px; top: 4px; width: 38px; height: 38px; border-radius: 4px; background: #e8f5ec; border: 1px solid #d9eadd; }
.app.focused::after { content: ""; position: absolute; bottom: 5px; left: 14px; width: 16px; height: 3px; border-radius: 2px; background: #0078d4; }
.app .npp { width: 29px; height: 30px; margin: -5px 0 0 4px; }
.wa-badge { position: absolute; left: 18px; top: 6px; width: 26px; height: 16px; border-radius: 8px; background: #0078d4; color: #fff; font-size: 10.500px; line-height: 16px; text-align: center; }
.tray { margin-left: auto; padding-right: 19px; display: flex; align-items: center; }
.tray svg { width: 16px; height: 16px; fill: none; stroke: #1a211b; }
.tray .chev { width: 12px; height: 12px; margin-right: 18px; }
.tray .plane { margin-right: 7px; }
.tray .vol { margin-right: 9px; }
.clock { width: 79px; display: flex; flex-direction: column; align-items: flex-end; font-size: 11.600px; line-height: 16px; padding-bottom: 2px; }
```
